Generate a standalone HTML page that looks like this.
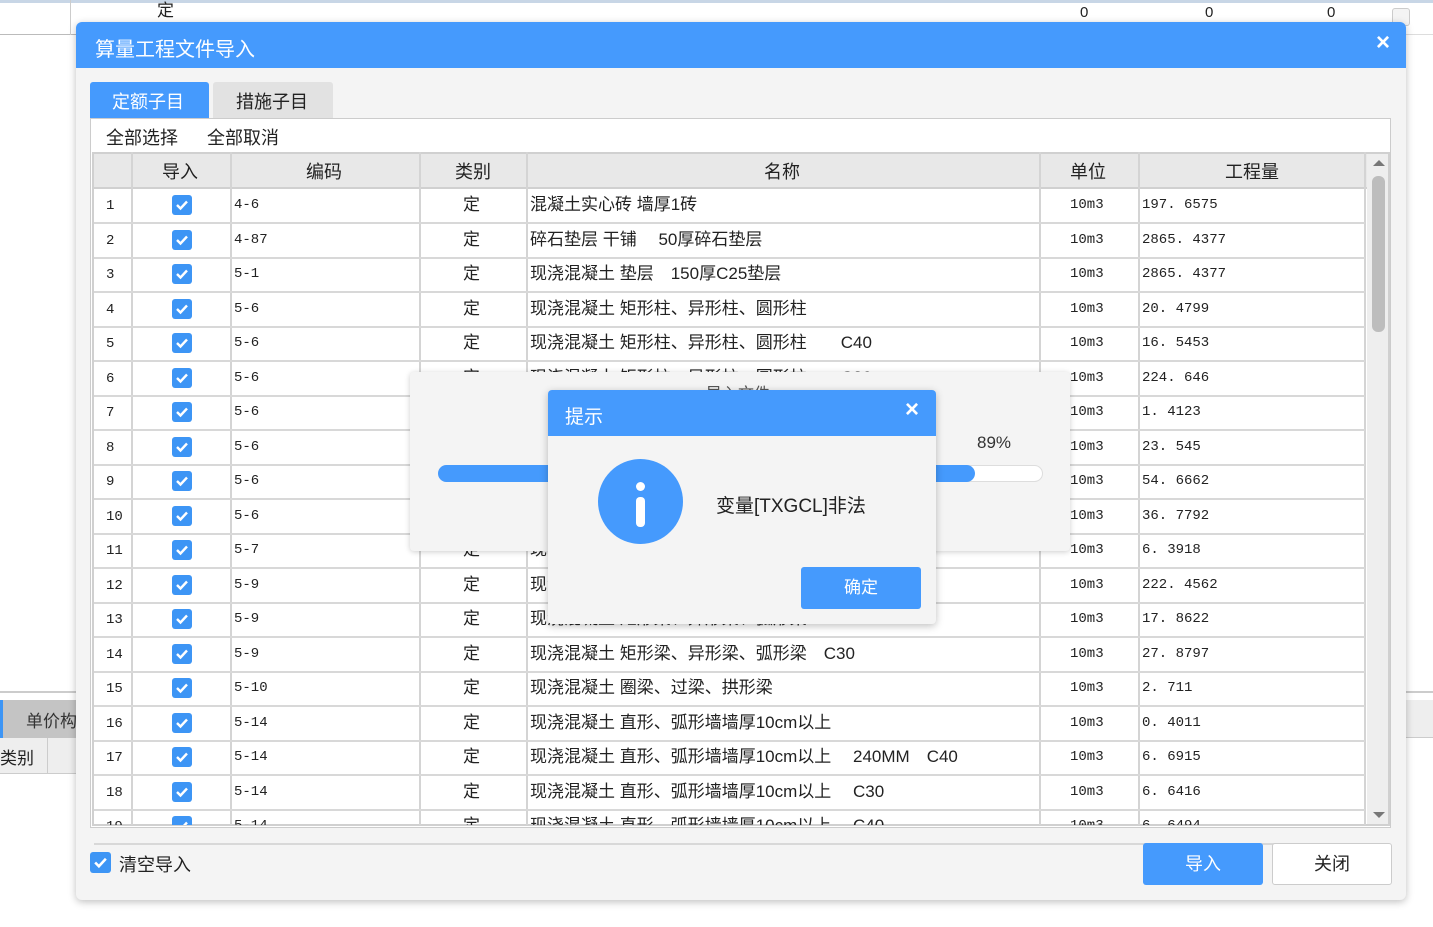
<!DOCTYPE html>
<html><head><meta charset="utf-8">
<style>
*{margin:0;padding:0;box-sizing:border-box}
body{width:1433px;height:927px;background:#fff;position:relative;overflow:hidden;font-family:"Liberation Sans","Noto Sans CJK SC",sans-serif;color:#222}
.a{position:absolute}
.cell{position:absolute;font-size:15px;line-height:34px;white-space:nowrap;overflow:hidden}
.mono{font-family:"Liberation Mono","Noto Sans CJK SC",monospace;font-size:14px}
.cb{position:absolute;width:20px;height:20px;background:#3d95f5;border-radius:3px}
.cb svg{position:absolute;left:3px;top:4px}
.vl{position:absolute;top:152px;height:673px;width:2px;background:#d4d4d4}
</style></head><body>
<div class="a" style="left:0;top:0;width:1433px;height:3px;background:#c8d6e6"></div>
<div class="a" style="left:0;top:34px;width:76px;height:1px;background:#bbb"></div>
<div class="a" style="left:76px;top:3px;width:1357px;height:32px;background:#fff;border-bottom:1px solid #ddd"></div>
<div class="a" style="left:70px;top:0;width:1px;height:35px;background:#ccc"></div>
<div class="a" style="left:157px;top:-4px;font-size:17px">定</div>
<div class="a" style="left:1080px;top:4px;font-size:15px">0</div>
<div class="a" style="left:1205px;top:4px;font-size:15px">0</div>
<div class="a" style="left:1327px;top:4px;font-size:15px">0</div>
<div class="a" style="left:1392px;top:8px;width:18px;height:18px;border:1px solid #ccc;border-radius:3px;background:#f4f4f4"></div>
<div class="a" style="left:0;top:691px;width:1433px;height:2px;background:#ccc"></div>
<div class="a" style="left:0;top:700px;width:80px;height:38px;background:#c4c4c4"></div>
<div class="a" style="left:0;top:700px;width:3px;height:38px;background:#3d95f5"></div>
<div class="a" style="left:26px;top:707px;font-size:17px;color:#333">单价构</div>
<div class="a" style="left:0;top:738px;width:80px;height:36px;background:#eee;border-bottom:1px solid #ccc"></div>
<div class="a" style="left:47px;top:738px;width:1px;height:36px;background:#ccc"></div>
<div class="a" style="left:0;top:744px;font-size:17px">类别</div>
<div class="a" style="left:1405px;top:700px;width:28px;height:38px;background:#eee;border-bottom:1px solid #ccc"></div>

<div class="a" style="left:76px;top:22px;width:1330px;height:878px;background:#f4f4f4;border-radius:6px;box-shadow:0 2px 8px rgba(0,0,0,.25);overflow:hidden">
  <div class="a" style="left:0;top:0;width:1330px;height:46px;background:#459afd"></div>
  <div class="a" style="left:19px;top:11px;font-size:20px;color:#fff">算量工程文件导入</div>
  <div class="a" style="left:1300px;top:7px;font-size:24px;color:#fff;font-weight:bold">×</div>
</div>
<div class="a" style="left:90px;top:82px;width:119px;height:36px;background:#459afd;border-radius:3px 3px 0 0"></div>
<div class="a" style="left:112px;top:88px;font-size:18px;color:#fff">定额子目</div>
<div class="a" style="left:213px;top:82px;width:120px;height:36px;background:#e2e2e2;border-radius:3px 3px 0 0"></div>
<div class="a" style="left:236px;top:88px;font-size:18px;color:#222">措施子目</div>
<div class="a" style="left:90px;top:118px;width:1301px;height:710px;background:#fff;border:1px solid #ccc"></div>
<div class="a" style="left:106px;top:124px;font-size:18px">全部选择</div>
<div class="a" style="left:207px;top:124px;font-size:18px">全部取消</div>
<div class="a" style="left:92px;top:152px;width:1298px;height:674px;border:2px solid #d0d0d0;background:#fff;overflow:hidden">
  <div class="a" style="left:0;top:0;width:1273px;height:35px;background:#e8e8e8;border-bottom:2px solid #d0d0d0"></div>
  <div class="a" style="left:1273px;top:0;width:23px;height:674px;background:#eee"></div>
  <div class="a" style="left:1278px;top:22px;width:13px;height:156px;background:#bdbdbd;border-radius:6px"></div>
  <div class="a" style="left:1279px;top:6px;width:0;height:0;border-left:6px solid transparent;border-right:6px solid transparent;border-bottom:6px solid #777"></div>
  <div class="a" style="left:1279px;top:658px;width:0;height:0;border-left:6px solid transparent;border-right:6px solid transparent;border-top:6px solid #777"></div>
</div>
<div class="vl" style="left:131px"></div><div class="vl" style="left:230px"></div><div class="vl" style="left:419px"></div><div class="vl" style="left:526px"></div><div class="vl" style="left:1039px"></div><div class="vl" style="left:1138px"></div><div class="vl" style="left:1364px"></div>
<div class="a" style="top:158px;left:162px;font-size:18px">导入</div>
<div class="a" style="top:158px;left:306px;font-size:18px">编码</div>
<div class="a" style="top:158px;left:455px;font-size:18px">类别</div>
<div class="a" style="top:158px;left:764px;font-size:18px">名称</div>
<div class="a" style="top:158px;left:1070px;font-size:18px">单位</div>
<div class="a" style="top:158px;left:1225px;font-size:18px">工程量</div>

<div id="tb"></div>
<script>
var d=[["4-6","混凝土实心砖 墙厚1砖","197.6575"],["4-87","碎石垫层 干铺　 50厚碎石垫层","2865.4377"],["5-1","现浇混凝土 垫层　150厚C25垫层","2865.4377"],["5-6","现浇混凝土 矩形柱、异形柱、圆形柱","20.4799"],["5-6","现浇混凝土 矩形柱、异形柱、圆形柱　　C40","16.5453"],["5-6","现浇混凝土 矩形柱、异形柱、圆形柱　　C30","224.646"],["5-6","现浇混凝土 矩形柱、异形柱、圆形柱　　C30","1.4123"],["5-6","现浇混凝土 矩形柱、异形柱、圆形柱　　C30","23.545"],["5-6","现浇混凝土 矩形柱、异形柱、圆形柱　　C30","54.6662"],["5-6","现浇混凝土 矩形柱、异形柱、圆形柱　　C30","36.7792"],["5-7","现浇混凝土 构造柱","6.3918"],["5-9","现浇混凝土 矩形梁、异形梁、弧形梁","222.4562"],["5-9","现浇混凝土 矩形梁、异形梁、弧形梁　C30　C0","17.8622"],["5-9","现浇混凝土 矩形梁、异形梁、弧形梁　C30","27.8797"],["5-10","现浇混凝土 圈梁、过梁、拱形梁","2.711"],["5-14","现浇混凝土 直形、弧形墙墙厚10cm以上","0.4011"],["5-14","现浇混凝土 直形、弧形墙墙厚10cm以上　 240MM　C40","6.6915"],["5-14","现浇混凝土 直形、弧形墙墙厚10cm以上　 C30","6.6416"],["5-14","现浇混凝土 直形、弧形墙墙厚10cm以上　 C40","6.6494"]];
var h="";
for(var i=0;i<19;i++){var t=188+i*34.5;var r=d[i];
h+='<div class="a" style="left:94px;top:'+(t+34)+'px;width:1271px;height:2px;background:#d8d8d8"></div>';
h+='<div class="a" style="left:94px;top:'+t+'px;width:1271px;height:'+(i==18?16:34)+'px;overflow:hidden">';
h+='<div class="cell mono" style="left:12px;top:1px">'+(i+1)+'</div>';
h+='<div class="cb" style="left:78px;top:7px"><svg width="14" height="12" viewBox="0 0 14 12"><path d="M2 6 L5.5 9.5 L12 2.5" stroke="#fff" stroke-width="2.4" fill="none"/></svg></div>';
h+='<div class="cell mono" style="left:140px;top:0">'+r[0]+'</div>';
h+='<div class="cell" style="left:369px;top:0;font-size:17px">定</div>';
h+='<div class="cell" style="left:436px;top:0;font-size:17px">'+r[1]+'</div>';
h+='<div class="cell mono" style="left:976px;top:0">10m3</div>';
h+='<div class="cell mono" style="left:1048px;top:0">'+r[2].replace(".",". ")+'</div>';
h+='</div>';}
document.getElementById("tb").innerHTML=h;
</script>
<div class="a" style="left:90px;top:852px;width:21px;height:21px;background:#3d95f5;border-radius:3px"><svg style="position:absolute;left:3px;top:4px" width="15" height="13" viewBox="0 0 14 12"><path d="M2 6 L5.5 9.5 L12 2.5" stroke="#fff" stroke-width="2.4" fill="none"/></svg></div>
<div class="a" style="left:119px;top:851px;font-size:18px">清空导入</div>
<div class="a" style="left:1143px;top:843px;width:120px;height:42px;background:#459afd;border-radius:3px;color:#fff;font-size:18px;text-align:center;line-height:42px">导入</div>
<div class="a" style="left:1272px;top:843px;width:120px;height:42px;background:#fff;border:1px solid #ccc;border-radius:3px;font-size:18px;text-align:center;line-height:40px">关闭</div>

<div class="a" style="left:410px;top:372px;width:660px;height:179px;background:#f4f4f4;border-radius:4px;box-shadow:0 1px 6px rgba(0,0,0,.2)"></div>
<div class="a" style="left:706px;top:380px;font-size:16px;color:#555">导入文件</div>
<div class="a" style="left:977px;top:433px;font-size:17px;color:#333">89%</div>
<div class="a" style="left:438px;top:465px;width:605px;height:17px;background:#fff;border:1px solid #ddd;border-radius:9px"></div>
<div class="a" style="left:438px;top:465px;width:537px;height:17px;background:#459afd;border-radius:9px"></div>
<div class="a" style="left:548px;top:390px;width:388px;height:234px;background:#f4f4f4;border-radius:4px;box-shadow:0 2px 8px rgba(0,0,0,.25);overflow:hidden">
  <div class="a" style="left:0;top:0;width:388px;height:46px;background:#459afd"></div>
  <div class="a" style="left:17px;top:12px;font-size:19px;color:#fff">提示</div>
  <div class="a" style="left:357px;top:6px;font-size:24px;color:#fff;font-weight:bold">×</div>
  <div class="a" style="left:50px;top:69px;width:85px;height:85px;border-radius:50%;background:#459afd"></div>
  <div class="a" style="left:88px;top:92px;width:9px;height:9px;border-radius:50%;background:#fff"></div>
  <div class="a" style="left:88px;top:107px;width:9px;height:30px;border-radius:4px;background:#fff"></div>
  <div class="a" style="left:168px;top:101px;font-size:19px;color:#222">变量[TXGCL]非法</div>
  <div class="a" style="left:253px;top:177px;width:120px;height:42px;background:#459afd;border-radius:3px;color:#fff;font-size:17px;text-align:center;line-height:42px">确定</div>
</div>
</body></html>
